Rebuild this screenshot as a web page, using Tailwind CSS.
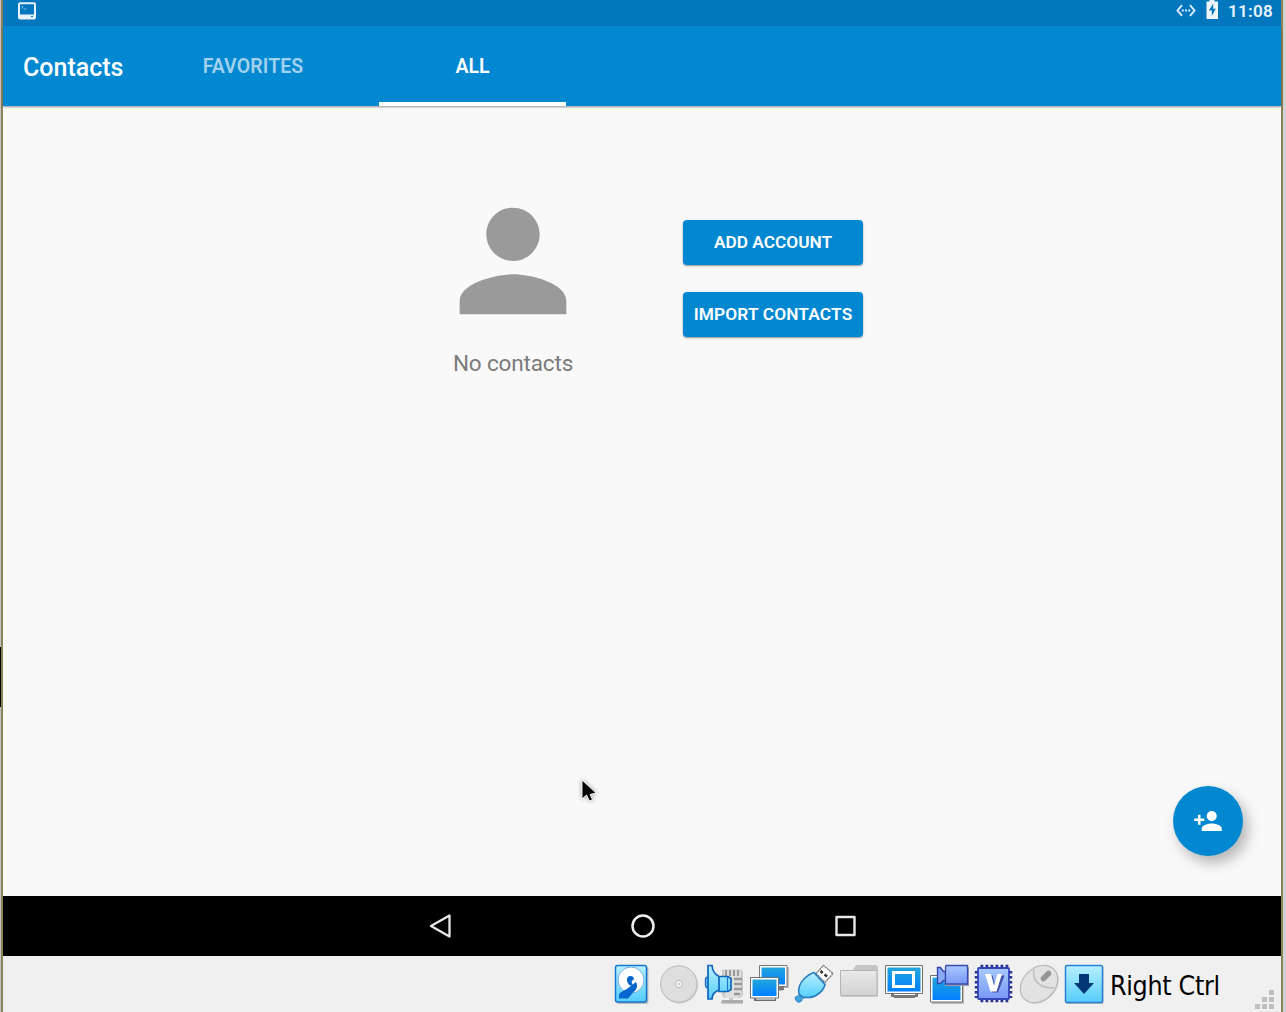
<!DOCTYPE html>
<html lang="en">
<head>
<meta charset="utf-8">
<title>Contacts</title>
<script src="https://cdn.jsdelivr.net/npm/@tailwindcss/browser@4"></script>
</head>
<body class="w-[1286px] h-[1012px] overflow-hidden bg-[#d2d2d2] font-[Roboto,sans-serif]">
<div class="relative flex w-full h-full">
  <div class="w-px h-full shrink-0 bg-[#c4c4c4]"></div>
  <div class="absolute left-0 top-[647px] w-px h-[60px] bg-black"></div>
  <main class="w-[1282px] shrink-0 h-full flex flex-col border-x-2 border-[#8f8258] bg-[#f9f9f9]">
    <!-- Android status bar -->
    <div class="h-[26px] shrink-0 bg-[#0277bd] flex items-start justify-between pl-[15px] pr-[7px]">
      <svg class="mt-[2px]" width="18" height="18" viewBox="0 0 18 18"><rect x="1" y="1.200" width="16" height="15.300" rx="1" fill="none" stroke="#e5f2fa" stroke-width="2"/><path d="M1 12.500h16v4H1z" fill="#e5f2fa"/><path d="M3.500 4l1.500 1.200-1.500 1.200M5.500 7h3" stroke="#a5cfea" stroke-width=".8" fill="none"/><path d="M13 14.500h2" stroke="#0277bd"/></svg>
      <div class="flex items-start text-[#e8f4fb]">
        <svg class="mt-1" width="20" height="13" viewBox="0 0 20 13" fill="none" stroke="#e0f0f9" stroke-width="1.900"><path d="M6 1.200L1.500 6.500 6 11.800M14 1.200l4.500 5.300L14 11.800"/><path d="M5.800 6.500h1.900M9.100 6.500H11M12.300 6.500h1.900"/></svg>
        <svg class="ml-2.5" width="13" height="19" viewBox="0 0 13 19"><path d="M3.500 0h5v1.500H12V19H.5V1.500h3z" fill="#eef7fc"/><path d="M7.200 3.500L3 10.500h2.800V16l4-7.200H7.200z" fill="#0277bd"/></svg>
        <span class="ml-[9px] w-[46px] text-[17px] leading-[23px] font-semibold tracking-[.3px] whitespace-nowrap">11:08</span>
      </div>
    </div>
    <!-- App bar -->
    <header class="h-20 shrink-0 bg-[#0288d1] flex text-white shadow-[0_1px_2px_rgba(0,0,0,.4)]">
      <h1 class="w-[157px] pl-5 pt-[1px] text-[25px] leading-[82px] font-medium">Contacts</h1>
      <nav class="flex text-[19.500px] font-semibold leading-[82px] text-center">
        <div class="w-[186px] text-[#a1d1ed] tracking-[.1px]">FAVORITES</div>
        <div class="w-[33px]"></div>
        <div class="w-[187px] border-b-4 border-white h-20">ALL</div>
      </nav>
    </header>
    <!-- Empty contact list -->
    <section class="h-[790px] shrink-0 flex flex-col justify-between">
      <div class="flex pl-[430px] pt-[75px]">
        <div class="w-40 flex flex-col items-center">
          <svg width="160" height="160" viewBox="0 0 24 24" fill="#9a9a9a"><path d="M12 12c2.210 0 4-1.790 4-4s-1.790-4-4-4-4 1.790-4 4 1.790 4 4 4zm0 2c-2.670 0-8 1.340-8 4v2h16v-2c0-2.660-5.330-4-8-4z"/></svg>
          <p class="mt-2 text-[22.500px] leading-7 tracking-[-.15px] text-[#7b7b7b] whitespace-nowrap">No contacts</p>
        </div>
        <div class="ml-[90px] pt-[39px] flex flex-col gap-[27px] text-white text-[17.300px] font-semibold">
          <button class="w-[180px] h-[45px] pt-px bg-[#0288d1] rounded-sm shadow-[0_1px_2px_rgba(0,0,0,.4)] whitespace-nowrap">ADD ACCOUNT</button>
          <button class="w-[180px] h-[45px] pt-px bg-[#0288d1] rounded-sm shadow-[0_1px_2px_rgba(0,0,0,.4)] whitespace-nowrap tracking-[.15px]">IMPORT CONTACTS</button>
        </div>
      </div>
      <button aria-label="Add contact" class="self-end mr-[38px] mb-10 size-[70px] rounded-full bg-[#0288d1] flex items-center justify-center shadow-[5px_7px_14px_rgba(0,0,0,.28)]">
        <svg width="30" height="30" viewBox="0 0 24 24" fill="#fff"><path d="M15 12c2.210 0 4-1.790 4-4s-1.790-4-4-4-4 1.790-4 4 1.790 4 4 4zm-9-2V7H4v3H1v2h3v3h2v-3h3v-2H6zm9 4c-2.670 0-8 1.340-8 4v2h16v-2c0-2.660-5.330-4-8-4z"/></svg>
      </button>
    </section>
    <!-- Navigation bar -->
    <nav class="h-[60px] shrink-0 bg-black flex justify-center items-center gap-[178px] pl-[2px]">
      <svg width="24" height="26" viewBox="0 0 24 26" fill="none" stroke="#e8e8e8" stroke-width="2.300" stroke-linejoin="round"><path d="M21.500 2.500v21L3 13z"/></svg>
      <svg width="26" height="26" viewBox="0 0 26 26" fill="none" stroke="#eee" stroke-width="2.500"><circle cx="13" cy="13" r="10.500"/></svg>
      <svg width="24" height="26" viewBox="0 0 24 26" fill="none" stroke="#e8e8e8" stroke-width="2.400" stroke-linejoin="round"><path d="M2.500 4h18v18h-18z"/></svg>
    </nav>
    <!-- Virtual machine status bar -->
    <footer class="relative h-14 shrink-0 bg-[#f0f0f0] flex items-start gap-[5px] pl-[611px] pt-2">
      <svg width="0" height="0" class="absolute"><defs>
        <linearGradient id="cy" x2="0" y2="1"><stop stop-color="#b8f0ff"/><stop offset="1" stop-color="#55cdfc"/></linearGradient>
        <linearGradient id="bl" x2="0" y2="1"><stop stop-color="#22a5dc"/><stop offset="1" stop-color="#0080ff"/></linearGradient>
        <linearGradient id="gr" x2="0" y2="1"><stop stop-color="#e9e9e9"/><stop offset="1" stop-color="#d2d2d2"/></linearGradient>
        <linearGradient id="vi" x2="0" y2="1"><stop stop-color="#a9c9ff"/><stop offset="1" stop-color="#7898f5"/></linearGradient>
      </defs></svg>
      <svg width="40" height="40" viewBox="0 0 40 40"><rect x="2.500" y="3" width="32" height="37" rx="2" fill="#bbb"/><rect x="1.500" y="1.500" width="31" height="36.500" rx="2" fill="url(#cy)" stroke="#1675cf" stroke-width="1.500"/><circle cx="17" cy="16" r="13" fill="#fff" stroke="#74aee0"/><circle cx="16.500" cy="15.500" r="3.500" fill="#0865c9"/><path d="M13 16c1 6 4 7 8 4l-2-6z" fill="#0865c9"/><path d="M17.500 17.500l3-3 1.500 4-3 3z" fill="#fff"/><path d="M22 18c-3 2-6 5-10 7.500-3 1.500-6.500 3-7 5.500v3.500h9c2-2 3-4 6-7 3-2 4-6 2-9.500z" fill="#0965ce"/></svg>
      <svg width="40" height="40" viewBox="0 0 40 40"><circle cx="20.500" cy="21" r="18.500" fill="#c9c9c9"/><circle cx="19.800" cy="20" r="18.200" fill="#dedede" stroke="#b9b9b9"/><circle cx="20" cy="20" r="3.800" fill="#f2f2f2" stroke="#b8b8b8"/><circle cx="20" cy="20" r="1.300" fill="#ccc"/></svg>
      <svg width="40" height="40" viewBox="0 0 40 40"><path d="M18 5.500h19l2 2V31l-3 3h-7v3h10v3H17v-3h8v-3h-5l-2-3z" fill="#c9c9c9"/><path d="M18 36h21v3H18z" fill="#adadad"/><path d="M20 5.500h15l2 2V31l-3 3H21z" fill="#dfdfdf"/><path d="M22 6v6M26 6v6M30 6v6M34 6v6" stroke="#999" stroke-width="2"/><path d="M30 15h8M30 20h8M30 25h8M30 30h6" stroke="#999" stroke-width="2.300"/><path d="M4 13.500H2.500L1.500 15v7l1 1.500H4" fill="#6fcfff" stroke="#1767b9" stroke-width="1.300"/><path d="M4 1.500h4Q8.500 9 15 12.500v13.500Q8.500 28 8 35H4zM15 12.500h9l3 2v11l-3 2h-9z" fill="url(#cy)" stroke="#0e65ba" stroke-width="1.700"/><path d="M23.500 13v14" stroke="#1b75d1" stroke-width="1.200"/></svg>
      <svg width="40" height="40" viewBox="0 0 40 40"><path d="M12 3h28v21h-6v3H12z" fill="#bbb"/><path d="M15 22h20v4H15z" fill="#777"/><path d="M10.500 1.500h27.500v21H10.500z" fill="#fff" stroke="#777"/><path d="M12.500 3.500h23.500v17H12.500z" fill="url(#bl)"/><path d="M5 33h22v4H5z" fill="#6c6c6c"/><path d="M7 33h19v2.500H7z" fill="#fff"/><path d="M1.500 13.500h28V34h-28z" fill="#fff" stroke="#6f6f6f"/><path d="M3.500 15.500h24V32h-24z" fill="url(#bl)"/></svg>
      <svg width="40" height="40" viewBox="0 0 40 40"><path d="M22 9.500l7.500-8 9.500 8-8 9z" fill="#fff" stroke="#808080" stroke-width="1.500" stroke-dasharray="2 .6"/><path d="M26.500 7l2.200 2M30.500 10.500l2.500 2" stroke="#333" stroke-width="2.500"/><path d="M20 8.500l11 12c-1 5-4 8-9 11-4 2-7 3-11 1.500l-1 1-5-4c-1-5 1-11 5-15 3-3 6-5.500 10-6.500z" fill="url(#cy)" stroke="#227abc" stroke-width="1.500"/><path d="M4.500 31.500l4 1.500-1 4-3 1.500-2.500-2-1-3z" fill="#3ba9e0" stroke="#227abc"/></svg>
      <svg width="40" height="40" viewBox="0 0 40 40"><path d="M14 6l3-5h20l2 2v30H14z" fill="#c5c5c5"/><path d="M1.500 6.500h36.500v25H1.500z" fill="url(#gr)" stroke="#b5b5b5"/><path d="M2 32.500h37" stroke="#ccc"/></svg>
      <svg width="40" height="40" viewBox="0 0 40 40"><path d="M7 29h27v4h-3v1H10v-1H7z" fill="#777"/><path d="M10 29h21v2H10z" fill="#fff"/><path d="M1.500 1.500h37V29.500h-37z" fill="#fff" stroke="#707070"/><path d="M3.500 3.500h33v24h-33z" fill="url(#bl)"/><path d="M9.500 8.500h20v14h-20z" fill="none" stroke="#fff" stroke-width="3"/></svg>
      <svg width="40" height="40" viewBox="0 0 40 40"><path d="M3 13h32v27H3z" fill="#bbb"/><path d="M1.500 11.500h32V38h-32z" fill="#fff" stroke="#6f6f6f"/><path d="M3.500 13.500h28V36h-28z" fill="url(#bl)"/><path d="M16 3h24v19H16z" fill="#9a9cae"/><path d="M8.500 3.500h3l3 4h2v9h-2l-3 3h-3z" fill="#8ba9f5" stroke="#3043a9" stroke-width="1.300"/><path d="M17 1.500h21.500v18.500H16.500V3z" fill="url(#vi)" stroke="#3b48ae" stroke-width="1.300"/></svg>
      <svg width="40" height="40" viewBox="0 0 40 40"><path d="M6.500 2.500h28M6.500 36.500h28" stroke="#26328f" stroke-width="3.500" stroke-dasharray="2.800 2.200"/><path d="M2.500 7v27M36.500 7v27" stroke="#26328f" stroke-width="3.500" stroke-dasharray="2.500 2.500"/><rect x="4" y="4" width="31" height="31" rx="1" fill="url(#vi)" stroke="#3445b8" stroke-width="1.800"/><path d="M12.500 11.500h6l3 11 3.500-11h5.500l-6.500 17h-5.500z" fill="#4151ab"/><path d="M11 10h6l3 11.500L23.500 10h4.500l-5.500 17.500h-6z" fill="#fff"/></svg>
      <svg width="40" height="40" viewBox="0 0 40 40"><ellipse cx="21" cy="21" rx="21" ry="16" transform="rotate(-45 21 21)" fill="#c9c9c9"/><ellipse cx="20" cy="20" rx="21" ry="16" transform="rotate(-45 20 20)" fill="#e2e2e2" stroke="#b9b9b9" stroke-width="1.200"/><path d="M15 5c-2 12 5 19 20 19" fill="none" stroke="#b8b8b8" stroke-width="1.300"/><path d="M24.500 14.500l5-5" stroke="#959595" stroke-width="5.500" stroke-linecap="round"/></svg>
      <svg width="40" height="40" viewBox="0 0 40 40"><rect x="2.500" y="3" width="37" height="37" fill="#bbb"/><rect x="1.500" y="1.500" width="37" height="37" rx="1.500" fill="url(#cy)" stroke="#2580d8" stroke-width="1.500"/><path d="M15 10h10v9h5L20 30 10 19h5z" fill="#043777"/></svg>
      <span class="ml-px mt-[3px] text-[26.500px] leading-[38px] text-black tracking-[-.3px] whitespace-nowrap font-['DejaVu_Sans_Condensed','DejaVu_Sans',sans-serif]">Right Ctrl</span>
      <svg class="ml-auto mr-[7px] mt-[26px]" width="19" height="19" viewBox="0 0 19 19" fill="#bfbfbf"><path d="M14 0h5v5h-5zM14 7h5v5h-5zM14 14h5v5h-5zM7 7h5v5H7zM7 14h5v5H7zM0 14h5v5H0z"/></svg>
    </footer>
  </main>
  <svg class="absolute left-[577px] top-[775px] drop-shadow-[0_0_2px_rgba(0,0,0,.35)]" width="24" height="32" viewBox="0 0 24 32"><path d="M5 5v19l4.500-4 3 6 3-1.500-2.500-5 6-1.500z" fill="#000" stroke="#fff" stroke-width=".9"/></svg>
</div>
</body>
</html>
